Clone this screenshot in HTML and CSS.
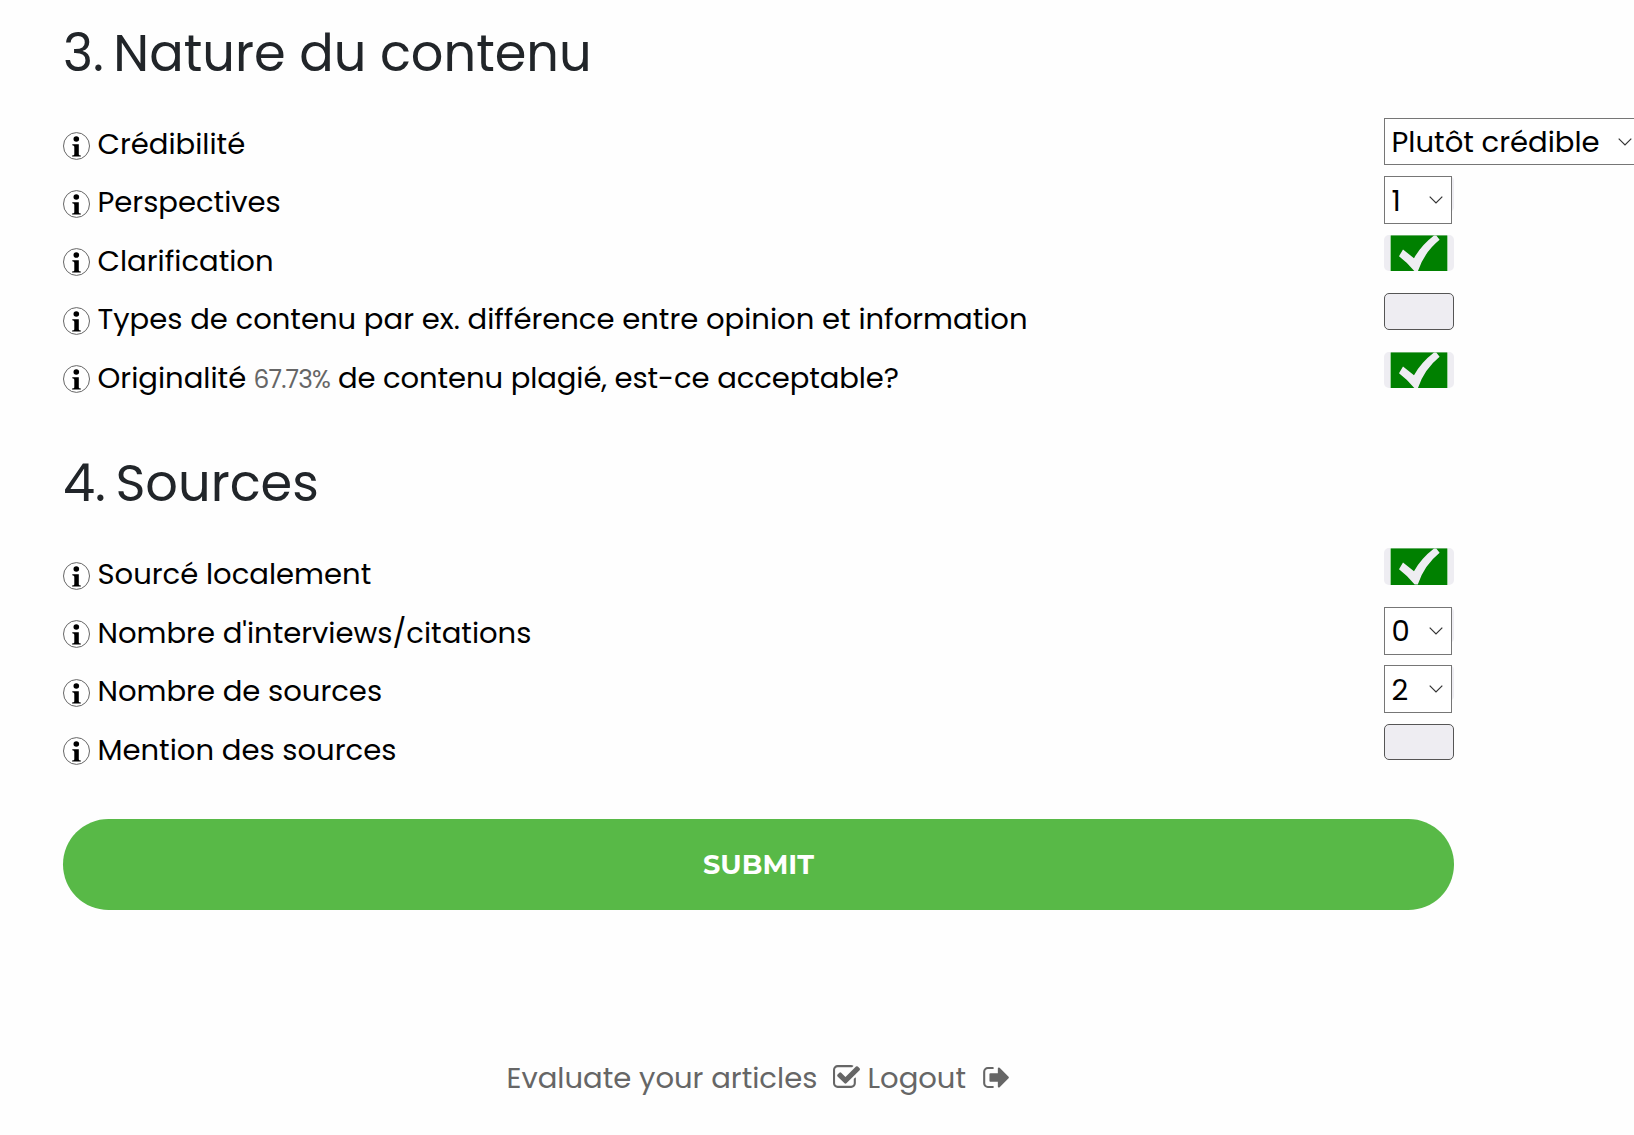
FILE: index.html
```html
<!DOCTYPE html>
<html lang="fr">
<head>
<meta charset="utf-8">
<title>Nature du contenu</title>
<link rel="stylesheet" href="styles.css">
</head>
<body>
<svg class="defs" aria-hidden="true">
  <symbol id="info" viewBox="0 0 27 28">
    <ellipse cx="13.5" cy="14" rx="13" ry="13.4" fill="#fff" stroke="#555" stroke-width="0.9"/>
    <circle cx="13.3" cy="7" r="2.8"/>
    <path d="M9.3 12.2H15.8V22.4Q15.8 23.5 17.8 23.6V24.6H9.1V23.6Q11.3 23.5 11.3 22.4V14.8Q11.3 13.4 9.3 13.3Z"/>
  </symbol>
  <symbol id="check" viewBox="0 0 70 36">
    <rect x="6" width="58" height="37" fill="#9fd09f"/>
    <rect x="7" width="56" height="37" fill="#008000"/>
    <path d="M15 20.7L19 14L30 22.7Q37 10 50 0H52.3L55.6 4.3Q40 17 33.8 36H30.7Q24 27.5 15 20.7Z" fill="#eeedf2"/>
  </symbol>
  <symbol id="chevron" viewBox="0 0 14 8">
    <path d="M0.7 0.7L7 7L13.3 0.7" fill="none" stroke="#333" stroke-width="1.2"/>
  </symbol>
</svg>

<main class="form">
  <h2 class="title title-content"><span class="number">3.</span> Nature du contenu</h2>
  <div class="rows">
    <div class="row"><svg class="info"><use href="#info"/></svg><span class="label">Crédibilité</span>
      <div class="picker picker-wide"><select><option>Plutôt crédible</option></select><svg class="chevron"><use href="#chevron"/></svg></div></div>
    <div class="row"><svg class="info"><use href="#info"/></svg><span class="label">Perspectives</span>
      <div class="holder"><div class="picker"><select><option>1</option></select><svg class="chevron"><use href="#chevron"/></svg></div></div></div>
    <div class="row"><svg class="info"><use href="#info"/></svg><span class="label">Clarification</span>
      <div class="toggle checked"><svg><use href="#check"/></svg></div></div>
    <div class="row"><svg class="info"><use href="#info"/></svg><span class="label">Types de contenu par ex. différence entre opinion et information</span>
      <div class="toggle"></div></div>
    <div class="row"><svg class="info"><use href="#info"/></svg><span class="label">Originalité <span class="percent">67.73%</span> <span class="question">de contenu plagié, est-ce acceptable?</span></span>
      <div class="toggle checked"><svg><use href="#check"/></svg></div></div>
  </div>

  <h2 class="title title-sources"><span class="number">4.</span> Sources</h2>
  <div class="rows">
    <div class="row"><svg class="info"><use href="#info"/></svg><span class="label">Sourcé localement</span>
      <div class="toggle checked"><svg><use href="#check"/></svg></div></div>
    <div class="row"><svg class="info"><use href="#info"/></svg><span class="label">Nombre d'interviews/citations</span>
      <div class="holder"><div class="picker"><select><option>0</option></select><svg class="chevron"><use href="#chevron"/></svg></div></div></div>
    <div class="row"><svg class="info"><use href="#info"/></svg><span class="label">Nombre de sources</span>
      <div class="holder"><div class="picker"><select><option>2</option></select><svg class="chevron"><use href="#chevron"/></svg></div></div></div>
    <div class="row"><svg class="info"><use href="#info"/></svg><span class="label">Mention des sources</span>
      <div class="toggle"></div></div>
  </div>

  <button class="submit">SUBMIT</button>
</main>

<footer class="links">
  <a class="evaluate">Evaluate your articles</a>
  <svg class="icon-check" viewBox="64 128 1664 1408"><path d="M1472 930v318q0 119-84.500 203.500t-203.500 84.500h-832q-119 0-203.500-84.500t-84.500-203.500v-832q0-119 84.500-203.500t203.500-84.500h832q63 0 117 25 15 7 18 23 3 17-9 29l-49 49q-10 10-23 10-3 0-9-2-23-6-45-6h-832q-66 0-113 47t-47 113v832q0 66 47 113t113 47h832q66 0 113-47t47-113v-254q0-13 9-22l64-64q10-10 23-10 6 0 12 3 20 8 20 29zm231-489l-814 814q-24 24-57 24t-57-24l-430-430q-24-24-24-57t24-57l110-110q24-24 57-24t57 24l263 263 647-647q24-24 57-24t57 24l110 110q24 24 24 57t-24 57z"/></svg>
  <a class="logout">Logout</a>
  <svg class="icon-exit" viewBox="64 256 1568 1280"><path d="M704 1440q0 4 1 20t.5 26.500-3 23.500-10 19.500-20.500 6.500h-320q-119 0-203.500-84.500t-84.500-203.500v-704q0-119 84.500-203.500t203.500-84.500h320q13 0 22.500 9.500t9.500 22.500q0 4 1 20t.5 26.500-3 23.500-10 19.500-20.500 6.500h-320q-66 0-113 47t-47 113v704q0 66 47 113t113 47h312l11.500 1 11.500 3 8 5.500 7 9 2 13.500zm928-544q0 26-19 45l-544 544q-19 19-45 19t-45-19-19-45v-288h-448q-26 0-45-19t-19-45v-384q0-26 19-45t45-19h448v-288q0-26 19-45t45-19 45 19l544 544q19 19 19 45z"/></svg>
</footer>
</body>
</html>
```
FILE: styles.css
```css
* {
  box-sizing: border-box;
}

body {
  margin: 0;
  height: 1135px;
  overflow: hidden;
  background: #fefefe;
  color: #000;
  font-family: Poppins, Inter, sans-serif;
  font-feature-settings: "cv11";
  font-size: 29.05px;
}

.defs {
  display: block;
  width: 0;
  height: 0;
}

.form {
  width: 1391px;
  margin-left: 63px;
  padding-top: 22px;
}

.title {
  margin: 0;
  height: 60px;
  line-height: 63px;
  font-size: 51px;
  font-weight: 400;
  color: #212529;
  white-space: nowrap;
}

.number {
  margin-right: -4px;
}

.title-content {
  margin-bottom: 36px;
}

.title-sources {
  margin: 42px 0 36px;
}

.row {
  display: grid;
  grid-template-columns: 34.5px 1286.5px 70px;
  align-items: start;
  height: 58.45px;
}

.info {
  width: 27px;
  height: 28px;
  margin-top: 13.6px;
}

.label {
  line-height: 51px;
  white-space: nowrap;
}

.percent {
  margin-left: -0.5px;
  font-size: 24.8px;
  letter-spacing: -0.8px;
  color: #666;
}

.question {
  letter-spacing: -0.09px;
}

.holder {
  width: 70px;
  height: 36px;
  border-radius: 5px;
  background: #eeedf2;
}

.picker {
  display: grid;
  align-items: center;
  width: 68px;
  height: 48px;
}

.picker-wide {
  width: 268px;
  height: 47px;
}

.picker select,
.chevron {
  grid-area: 1 / 1;
}

.picker select {
  appearance: none;
  width: 100%;
  height: 100%;
  margin: 0;
  padding: 0 0 0 6.5px;
  border: 1px solid #767676;
  border-radius: 0;
  background: #fff;
  color: #000;
  font: inherit;
}

.chevron {
  justify-self: end;
  width: 14px;
  height: 8px;
  margin-right: 9.5px;
  pointer-events: none;
}

.picker-wide .chevron {
  margin-right: 20.5px;
}

.toggle {
  width: 70px;
  height: 36.5px;
  overflow: hidden;
  border: 1px solid #555;
  border-radius: 5px;
  background: #eeedf2;
}

.checked {
  border: 0;
}

.toggle svg {
  display: block;
  width: 70px;
  height: 37px;
}

.submit {
  display: block;
  width: 1391px;
  height: 91px;
  margin: 37px 0 0;
  padding: 1px 0 0;
  border: 0;
  border-radius: 46px;
  background: #58b947;
  color: #fff;
  font-family: Montserrat, Inter, sans-serif;
  font-size: 27.1px;
  font-weight: 700;
}

.links {
  display: flex;
  margin: 144px 0 0 506.5px;
  line-height: 48px;
  color: #666;
  white-space: nowrap;
}

.links svg {
  fill: currentColor;
}

.evaluate {
  width: 326.5px;
}

.icon-check {
  width: 27px;
  height: 23px;
  margin: 11px 7.5px 0 0;
}

.logout {
  width: 115.5px;
}

.icon-exit {
  width: 26px;
  height: 21px;
  margin-top: 13px;
}
```
